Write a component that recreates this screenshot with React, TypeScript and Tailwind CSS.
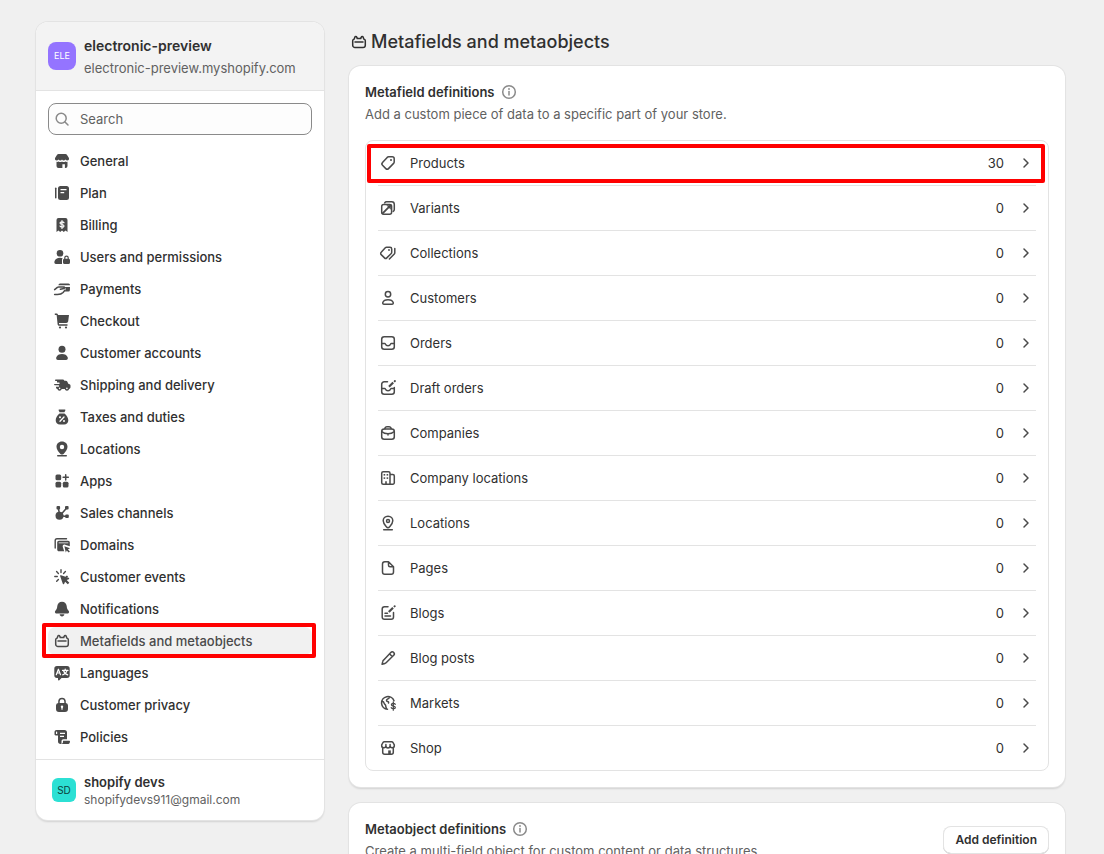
import type { ReactNode } from "react";

type IconProps = { children: ReactNode; className?: string };

/* Filled glyphs for the sidebar, 20px grid */
function Solid({ children, className = "text-[#4a4a4a]" }: IconProps) {
  return (
    <svg viewBox="0 0 20 20" fill="currentColor" aria-hidden="true" className={`size-5 shrink-0 ${className}`}>
      {children}
    </svg>
  );
}

/* Outlined glyphs, 20px grid */
function Line({ children, className = "text-[#4a4a4a]" }: IconProps) {
  return (
    <svg
      viewBox="0 0 20 20"
      fill="none"
      stroke="currentColor"
      strokeWidth="1.5"
      strokeLinecap="round"
      strokeLinejoin="round"
      aria-hidden="true"
      className={`size-5 shrink-0 ${className}`}
    >
      {children}
    </svg>
  );
}

function MetafieldsIcon({ className }: { className?: string }) {
  return (
    <Line className={className}>
      <path d="M3.7 8.8c0-.7.3-1.200.9-1.500l.7-.5.5-1.500c.1-.5.5-.8 1-.8s.9.3 1 .8l.4 1.200h3.600l.4-1.200c.1-.5.5-.8 1-.8s.9.3 1 .8l.5 1.500.7.5c.6.3.9.8.9 1.500v4.400a2.300 2.300 0 0 1-2.300 2.300H6a2.300 2.300 0 0 1-2.300-2.300z" />
      <path d="M6 10h8" />
    </Line>
  );
}

function InfoIcon() {
  return (
    <Line className="text-[#8a8a8a]">
      <circle cx="10" cy="10" r="6.3" />
      <path d="M10 9.5V13" />
      <circle cx="10" cy="7" r=".9" fill="currentColor" stroke="none" />
    </Line>
  );
}

const navItems = [
  {
    label: "General",
    icon: (
      <Solid>
        <path d="M6.500 3h7c.6 0 1.100.3 1.400.8l1.900 3c.7 1.500-.1 2.700-1.500 2.700-.8 0-1.400-.4-1.800-1-.4.6-1 1-1.800 1s-1.400-.4-1.700-1c-.3.6-.9 1-1.700 1s-1.400-.4-1.800-1c-.4.6-1 1-1.800 1-1.400 0-2.200-1.200-1.500-2.700l1.900-3c.3-.5.8-.8 1.400-.8z" />
        <path d="M4.500 10.800c1 .2 1.500 0 2.100-.4 1.100.7 2.300.7 3.400 0 1.100.7 2.300.7 3.400 0 .6.4 1.100.6 2.100.4V15a2 2 0 0 1-2 2h-.6v-3.800h-2.500V17H6.500a2 2 0 0 1-2-2z" />
      </Solid>
    ),
  },
  {
    label: "Plan",
    icon: (
      <Solid>
        <rect x="3" y="4.5" width="1.5" height="11" rx=".75" />
        <path
          fillRule="evenodd"
          d="M8.500 3h6A2.500 2.500 0 0 1 17 5.500v9a2.500 2.500 0 0 1-2.500 2.500h-6A2.500 2.500 0 0 1 6 14.500v-9A2.500 2.500 0 0 1 8.500 3zm0 3v1.300h6V6zm0 3v1.300h3.700V9z"
        />
      </Solid>
    ),
  },
  {
    label: "Billing",
    icon: (
      <Solid>
        <path d="M6.500 3h7a2 2 0 0 1 2 2v12l-2-1.400-1.700 1.400L10 15.600 8.200 17l-1.700-1.400-2 1.400V5a2 2 0 0 1 2-2z" />
        <path
          d="M12 7.800c-.3-.7-1-1-2-1-1.200 0-2 .5-2 1.300 0 2 4 .8 4 2.800 0 .8-.8 1.300-2 1.300-1 0-1.700-.4-2-1.100M10 5.500v8"
          fill="none"
          stroke="#fff"
          strokeWidth="1.2"
          strokeLinecap="round"
        />
      </Solid>
    ),
  },
  {
    label: "Users and permissions",
    icon: (
      <Solid>
        <circle cx="8" cy="6.3" r="3.3" />
        <path d="M2.500 14.200C3.200 12 5.300 10.800 8 10.800c1 0 1.900.2 2.700.5-.5.500-.7 1.100-.7 1.900V17H4c-1.300 0-2-1.300-1.500-2.800z" />
        <path
          fillRule="evenodd"
          d="M12.200 11.500v-.7a2.300 2.300 0 0 1 4.600 0v1c.7.200 1.200.8 1.200 1.600v2A1.600 1.600 0 0 1 16.400 17h-3.800a1.600 1.600 0 0 1-1.600-1.600v-2c0-.8.500-1.500 1.200-1.600zm1.200.2h2.200v-.9a1.100 1.100 0 0 0-2.200 0z"
        />
      </Solid>
    ),
  },
  {
    label: "Payments",
    icon: (
      <Solid>
        <path d="M8 4.500h8.500A1.500 1.500 0 0 1 18 6v.3H6.400C6.600 5.200 7.200 4.500 8 4.500zM12.800 8H18l-.1 3a1.500 1.500 0 0 1-1.500 1.500h-3.700l1.200-2.200z" />
        <path
          d="M2.600 10.600 5.400 8.300c.4-.3.800-.4 1.200-.4h5.200c1 0 1.100 1.300.2 1.500l-3.600.9M2.600 15.500h2.800c2.700 0 4.300-.5 5.700-2l1.900-2.400"
          fill="none"
          stroke="currentColor"
          strokeWidth="1.5"
          strokeLinecap="round"
          strokeLinejoin="round"
        />
      </Solid>
    ),
  },
  {
    label: "Checkout",
    icon: (
      <Solid>
        <path d="M2.800 2.500h1.500c.9 0 1.500.5 1.700 1.300L6.100 4H17l-.8 6.200a2 2 0 0 1-2 1.800H7v1.300h8.500v1.400H7.200c-1 0-1.600-.6-1.600-1.500L4.700 4.600c-.1-.5-.3-.6-.7-.6H2.800z" />
        <circle cx="8" cy="16.5" r="1.1" />
        <circle cx="14" cy="16.5" r="1.1" />
      </Solid>
    ),
  },
  {
    label: "Customer accounts",
    icon: (
      <Solid>
        <circle cx="10" cy="6.3" r="3.5" />
        <path d="M4.300 14.300C5 12.200 7.200 11 10 11s5 1.200 5.700 3.300c.5 1.400-.3 2.700-1.700 2.700H6c-1.400 0-2.200-1.300-1.700-2.700z" />
      </Solid>
    ),
  },
  {
    label: "Shipping and delivery",
    icon: (
      <Solid>
        <path d="M3.700 4.500h7c.9 0 1.500.6 1.600 1.300h1.500c.7 0 1.300.4 1.600 1l.9 1.900 1.300.5c.6.300.9.800.9 1.400v1.700c0 .9-.6 1.500-1.400 1.600a2.200 2.200 0 0 1-4.300.1H9.700a2.200 2.200 0 0 1-4.300-.1C4.600 13.800 4 13.300 4 12.500v-.8h2.500a.7.700 0 0 0 0-1.400H2.700a.7.700 0 0 1 0-1.400H7a.7.700 0 0 0 0-1.400H5V5.900H3.700a.7.700 0 0 1 0-1.400z" />
        <circle cx="7.6" cy="13.4" r=".8" fill="#fff" />
        <circle cx="14.9" cy="13.4" r=".8" fill="#fff" />
      </Solid>
    ),
  },
  {
    label: "Taxes and duties",
    icon: (
      <Solid>
        <path d="M7.300 2.500h5.400c.6 0 .9.600.6 1.100l-.9 1.600H7.600l-.9-1.600c-.3-.5 0-1.100.6-1.100zM7.500 6.500h5c2.300 2 3.800 4.400 3.800 6.800 0 2.600-1.600 4.200-4.200 4.200H7.900c-2.600 0-4.200-1.600-4.200-4.200 0-2.400 1.500-4.800 3.800-6.800z" />
        <g fill="#fff">
          <circle cx="8" cy="10.2" r="1" />
          <circle cx="12" cy="14" r="1" />
          <path d="m8 14.200 4-4.200" stroke="#fff" strokeWidth="1.3" strokeLinecap="round" />
        </g>
      </Solid>
    ),
  },
  {
    label: "Locations",
    icon: (
      <Solid>
        <path
          fillRule="evenodd"
          d="M10 2.500c3.300 0 5.500 2.300 5.500 5.200 0 2.500-1.700 4.600-3.100 6.200-.8.900-1.500 1.600-2.400 1.600s-1.600-.7-2.400-1.600c-1.400-1.600-3.100-3.700-3.100-6.200 0-2.900 2.200-5.200 5.500-5.200zm0 3.300a2.200 2.200 0 1 0 0 4.400 2.200 2.200 0 0 0 0-4.400z"
        />
        <rect x="5" y="16" width="10" height="1.5" rx=".75" />
      </Solid>
    ),
  },
  {
    label: "Apps",
    icon: (
      <Solid>
        <rect x="3.5" y="3.5" width="5.7" height="5.7" rx="1.5" />
        <rect x="3.5" y="10.8" width="5.7" height="5.7" rx="1.5" />
        <rect x="10.8" y="10.8" width="5.7" height="5.7" rx="1.5" />
        <path d="M13.700 3.700v5.200M11.100 6.300h5.200" stroke="currentColor" strokeWidth="1.5" strokeLinecap="round" />
      </Solid>
    ),
  },
  {
    label: "Sales channels",
    icon: (
      <Solid>
        <circle cx="7.5" cy="12.7" r="4" />
        <rect x="4.5" y="3" width="3.6" height="3.6" rx="1" />
        <rect x="13" y="3" width="3.6" height="3.6" rx="1" />
        <rect x="13.2" y="11.5" width="3.6" height="3.6" rx="1" />
        <path d="m6.300 5 1 5M14.500 5.200 8.500 12M8 12.700l7 .7" stroke="currentColor" strokeWidth="1.5" />
      </Solid>
    ),
  },
  {
    label: "Domains",
    icon: (
      <Solid>
        <path
          d="M3.200 13V5.500c0-1 .8-1.800 1.800-1.800h9.500"
          fill="none"
          stroke="currentColor"
          strokeWidth="1.4"
          strokeLinecap="round"
        />
        <path d="M7 5.700h9c1.100 0 1.800.8 1.800 1.800v3.700l-4.600-1.500c-1.700-.5-2.900.7-2.400 2.300l1.400 4.300H7c-1.100 0-1.800-.8-1.800-1.800v-7c0-1 .7-1.800 1.800-1.800z" />
        <rect x="6.7" y="7.2" width="9.6" height="1.2" fill="#fff" opacity=".65" />
        <path d="m12.400 11.300 5.600 2-2.100 1.100 2 2-1.200 1.100-2-2-.9 1.900z" />
      </Solid>
    ),
  },
  {
    label: "Customer events",
    icon: (
      <Solid>
        <path
          d="M9 2.800v2.700M4.600 4.600l1.800 1.800M2.800 9.500h2.500M13.400 4.600l-1.800 1.800M15.200 9.500h-.8M4.700 14.300l1.700-1.700"
          stroke="currentColor"
          strokeWidth="1.4"
          strokeLinecap="round"
        />
        <path d="M8.100 9.100c-.2-.6.300-1.100.9-.9l7.600 2.500c.8.300.8 1.200.1 1.500l-2 .9 2.600 2.700-1.500 1.500-2.700-2.600-.9 2c-.3.700-1.300.7-1.500-.1z" />
      </Solid>
    ),
  },
  {
    label: "Notifications",
    icon: (
      <Solid>
        <path d="M10 2.700c2.700 0 4.500 1.900 4.700 4.400.2 2.300.5 3 1.700 4.400.5.600.7 1 .7 1.500 0 .9-.7 1.500-1.700 1.500H4.600c-1 0-1.700-.6-1.700-1.500 0-.5.2-.9.7-1.500 1.200-1.400 1.500-2.100 1.700-4.400.2-2.500 2-4.400 4.700-4.400z" />
        <path d="M7.700 15.300h4.600c0 1.300-1 2.200-2.300 2.200s-2.300-.9-2.300-2.200z" />
      </Solid>
    ),
  },
  { label: "Metafields and metaobjects", icon: <MetafieldsIcon />, active: true },
  {
    label: "Languages",
    icon: (
      <Solid>
        <path d="M5 3h10a2.700 2.700 0 0 1 2.700 2.700v6.600A2.700 2.700 0 0 1 15 15H9.500l-2.200 2.300c-.5.500-1.300.2-1.300-.5V15H5a2.700 2.700 0 0 1-2.700-2.700V5.700A2.700 2.700 0 0 1 5 3z" />
        <path
          d="m4.300 11.700 2.100-5.500 2.100 5.500M5 10h2.800M10.500 7.400h5.500M13.200 6v1.400M15 7.500c-.4 2-2.200 3.700-4.300 4.400M11.500 7.500c.5 2 2.100 3.600 4.200 4.400"
          fill="none"
          stroke="#fff"
          strokeWidth="1.2"
          strokeLinecap="round"
          strokeLinejoin="round"
        />
      </Solid>
    ),
  },
  {
    label: "Customer privacy",
    icon: (
      <Solid>
        <path
          fillRule="evenodd"
          d="M6.200 8V6.600a3.800 3.800 0 0 1 7.600 0V8A2.500 2.500 0 0 1 16 10.500V14a3 3 0 0 1-3 3H7a3 3 0 0 1-3-3v-3.500A2.500 2.500 0 0 1 6.200 8zm1.500 0h4.600V6.600a2.300 2.300 0 0 0-4.600 0z"
        />
        <circle cx="10" cy="11.8" r="1.2" fill="#fff" />
        <path d="M10 12v2.200" stroke="#fff" strokeWidth="1.2" strokeLinecap="round" />
      </Solid>
    ),
  },
  {
    label: "Policies",
    icon: (
      <Solid>
        <path
          fillRule="evenodd"
          d="M4.500 3h8A2.500 2.500 0 0 1 15 5.500v6.700h-3.500c-1.200 0-2 .8-2 2V17h-.8A2.700 2.700 0 0 1 6 14.300V8.500H3.700c-.7 0-1.200-.5-1.200-1.200V5c0-1.200.9-2 2-2zM4 5.200v1.900h1.200V5.200c0-.8-1.200-.8-1.200 0zM8 5.800V7h5V5.800zm0 2.900v1.200h4V8.700z"
        />
        <path d="M11 13.700h6.300c.4 0 .7.300.7.700 0 1.600-1 2.600-2.500 2.600H9.700c.9-.4 1.300-1.200 1.300-2.200z" />
      </Solid>
    ),
  },
];

const definitions = [
  {
    label: "Products",
    count: 30,
    highlighted: true,
    icon: (
      <Line>
        <path d="M10.600 3.800h3.600c1.100 0 2 .9 2 2v3.100c0 .6-.2 1.100-.6 1.500l-5.100 5.200c-.8.8-1.900.8-2.700 0l-3.300-3.300c-.8-.8-.8-1.900 0-2.700l4.700-5.200c.4-.4.9-.6 1.400-.6z" />
        <circle cx="13" cy="7" r="1" fill="currentColor" stroke="none" />
      </Line>
    ),
  },
  {
    label: "Variants",
    count: 0,
    icon: (
      <Line>
        <rect x="3.7" y="6.4" width="9.900" height="9.900" rx="2" />
        <path d="M6.700 4.900c.4-.7 1-1.100 1.800-1.100h5.200a2.600 2.600 0 0 1 2.600 2.600v5.200c0 .8-.4 1.400-1.100 1.800" />
        <path d="m4.600 15.400 8.200-8.200" strokeWidth="1.8" />
        <path d="M8.300 7.200h4.500v4.500z" fill="currentColor" stroke="none" />
      </Line>
    ),
  },
  {
    label: "Collections",
    count: 0,
    icon: (
      <Line>
        <path d="M8.500 4.200H12c1 0 1.700.7 1.700 1.700v3.300c0 .5-.2.900-.5 1.300l-4.400 4.400c-.7.700-1.600.7-2.300 0l-3.300-3.300c-.7-.7-.7-1.600 0-2.300l4.100-4.600c.3-.3.800-.5 1.200-.5z" />
        <circle cx="11" cy="7" r=".9" fill="currentColor" stroke="none" />
        <path d="M16.800 5.500v4.200c0 .5-.2 1-.5 1.300l-4.900 5" />
      </Line>
    ),
  },
  {
    label: "Customers",
    count: 0,
    icon: (
      <Line>
        <circle cx="10" cy="6.2" r="2.7" />
        <path d="M4.800 14.600c.6-1.800 2.600-2.900 5.200-2.900s4.600 1.100 5.200 2.900c.3.900-.3 1.700-1.200 1.700H6c-.9 0-1.500-.8-1.200-1.700z" />
      </Line>
    ),
  },
  {
    label: "Orders",
    count: 0,
    icon: (
      <Line>
        <rect x="3.7" y="3.8" width="12.6" height="12.4" rx="2.5" />
        <path d="M3.800 10.500h2.800c.4 0 .7.200.8.500.4 1 1.300 1.700 2.600 1.700s2.200-.7 2.600-1.700c.1-.3.400-.5.800-.5h2.800" />
      </Line>
    ),
  },
  {
    label: "Draft orders",
    count: 0,
    icon: (
      <Line>
        <path d="M9.500 3.800H6.200a2.500 2.500 0 0 0-2.500 2.500v7.400a2.500 2.500 0 0 0 2.500 2.500h7.600a2.500 2.500 0 0 0 2.500-2.500V9.500" />
        <path d="M3.800 10.500h2.800c.4 0 .7.200.8.500.4 1 1.300 1.700 2.600 1.700s2.200-.7 2.600-1.700c.1-.3.400-.5.800-.5h2.800" />
        <path d="m11 8.700 4.200-4.200" strokeWidth="2.2" strokeLinecap="butt" />
        <path d="m16.700 3.200.2-.2" strokeWidth="2" />
      </Line>
    ),
  },
  {
    label: "Companies",
    count: 0,
    icon: (
      <Line>
        <rect x="3.7" y="6" width="12.6" height="10.2" rx="2.5" />
        <path d="M6.800 5.800c.2-1.300 1-2.100 2.200-2.100h2c1.200 0 2 .8 2.200 2.100M4 8.800c1.500 1.400 3.500 2 6 2s4.500-.6 6-2M10 10.800V12" />
      </Line>
    ),
  },
  {
    label: "Company locations",
    count: 0,
    icon: (
      <Line>
        <path d="M12 16.200H5.200a1.500 1.500 0 0 1-1.500-1.500V5.300a1.500 1.500 0 0 1 1.500-1.500h5.300A1.500 1.500 0 0 1 12 5.300zM12 6.500h2.800A1.500 1.500 0 0 1 16.300 8v6.700a1.500 1.500 0 0 1-1.500 1.500H12" />
        <path d="M8 16v-2.800" strokeWidth="1.6" strokeLinecap="butt" />
        <g fill="currentColor" stroke="none">
          <rect x="5.6" y="6" width="1.6" height="1.6" />
          <rect x="8.6" y="6" width="1.6" height="1.6" />
          <rect x="5.6" y="9.3" width="1.6" height="1.6" />
          <rect x="8.6" y="9.3" width="1.6" height="1.6" />
        </g>
      </Line>
    ),
  },
  {
    label: "Locations",
    count: 0,
    icon: (
      <Line>
        <path d="M10 3.200c2.900 0 4.800 2 4.800 4.500 0 2.300-1.500 4.100-2.900 5.700-.7.800-1.300 1.300-1.900 1.300s-1.200-.5-1.900-1.300c-1.400-1.600-2.900-3.400-2.900-5.700 0-2.500 1.900-4.500 4.800-4.500z" />
        <circle cx="10" cy="7.9" r="1.5" />
        <path d="M5.700 16.800h8.600" />
      </Line>
    ),
  },
  {
    label: "Pages",
    count: 0,
    icon: (
      <Line>
        <path d="M10.500 3.800H6.800a2.300 2.300 0 0 0-2.300 2.300v7.800a2.300 2.300 0 0 0 2.300 2.300h6.400a2.300 2.300 0 0 0 2.300-2.300V8.800zv3.500c0 .8.700 1.500 1.500 1.500h3.500" />
      </Line>
    ),
  },
  {
    label: "Blogs",
    count: 0,
    icon: (
      <Line>
        <path d="M10 3.800H6.500a2.300 2.300 0 0 0-2.300 2.300v7.800a2.300 2.300 0 0 0 2.300 2.300h6.700a2.300 2.300 0 0 0 2.300-2.300V9.500M7 10.300h2.500M7 13h5.500" />
        <path d="m10.800 9 4.200-4.200" strokeWidth="2.2" strokeLinecap="butt" />
        <path d="m16.500 3.400.2-.2" strokeWidth="2" />
      </Line>
    ),
  },
  {
    label: "Blog posts",
    count: 0,
    icon: (
      <Line>
        <path d="M12.800 4.400a2 2 0 0 1 2.900 0 2 2 0 0 1 0 2.800l-7.600 7.600c-.3.300-.7.600-1.200.7l-2.800.7.700-2.800c.1-.5.300-.9.700-1.200zM11.500 5.800l2.700 2.700" />
      </Line>
    ),
  },
  {
    label: "Markets",
    count: 0,
    icon: (
      <Line>
        <path d="M9.500 16.300A6.400 6.400 0 1 1 16 7.800M4 8.300c1.500.2 2 1 2.200 2 .2 1.200 1.500 1 1.500 2.500 0 1.200.5 1.500.8 3.200M11.500 4c-.3 1.500-1.300 1.800-2.300 2.300-1 .6-.9 2.100.3 2.200 1 .1 1.300.6 1 1.500" />
        <path
          d="M17.200 11.300c-.3-.6-1-.9-1.900-.9-1.100 0-1.900.5-1.900 1.300 0 1.900 3.900.8 3.900 2.700 0 .8-.8 1.300-2 1.300-1 0-1.700-.4-2-1M15.300 9v8.200"
          strokeWidth="1.3"
        />
      </Line>
    ),
  },
  {
    label: "Shop",
    count: 0,
    icon: (
      <Line>
        <path d="M6.300 3.800h7.400c.5 0 1 .3 1.300.7l1.300 2.300v.7a2.100 2.100 0 0 1-4.200.3 2.100 2.100 0 0 1-4.200 0 2.100 2.100 0 0 1-4.200-.3v-.7L5 4.500c.3-.4.8-.7 1.300-.7zM7.900 7.800V6.500M12.100 7.800V6.500M4.700 10v4.200c0 1.100.9 2 2 2h6.600c1.100 0 2-.9 2-2V10" />
        <path d="M11.500 16v-3.600" strokeWidth="2.6" strokeLinecap="butt" />
      </Line>
    ),
  },
];

function Sidebar() {
  return (
    <aside className="w-72 shrink-0 overflow-hidden rounded-xl bg-white shadow-[0_0_0_1px_#e3e3e3,0_2px_2px_rgba(0,0,0,0.13)]">
      <div className="flex items-center gap-2 border-b border-[#e3e3e3] bg-[#f3f3f3] p-3">
        <div className="flex size-7 shrink-0 items-center justify-center rounded-lg bg-[#9474ff] text-[9px] text-white">
          ELE
        </div>
        <div>
          <p className="text-sm leading-6 font-semibold">electronic-preview</p>
          <p className="text-[#616161]">electronic-preview.myshopify.com</p>
        </div>
      </div>

      <div className="px-3 pt-3 pb-2">
        <div className="relative mb-3">
          <input
            type="text"
            aria-label="Search"
            placeholder="Search"
            className="block h-8 w-full rounded-lg border border-[#8a8a8a] bg-[#fdfdfd] pr-3 pl-[31px] placeholder:text-[#616161]"
          />
          <Line className="pointer-events-none absolute top-1.5 left-1 text-[#8a8a8a]">
            <circle cx="9.2" cy="9.2" r="5" />
            <path d="m13 13 3 3" />
          </Line>
        </div>

        <nav aria-label="Settings" className="flex flex-col gap-1">
          {navItems.map((item) => (
            <a
              key={item.label}
              href="#"
              className={`relative flex h-7 items-center gap-2 rounded-lg px-1 font-[550] ${
                item.active ? "bg-[#f1f1f1] text-[#4a4a4a]" : ""
              }`}
            >
              {item.icon}
              {item.label}
              {item.active && (
                <span className="absolute -top-1 -right-1 -bottom-[3px] -left-1.5 rounded-xs border-4 border-[#ff0000]" />
              )}
            </a>
          ))}
        </nav>
      </div>

      <div className="flex items-center gap-2 border-t border-[#e3e3e3] px-4 py-3">
        <div className="flex size-6 shrink-0 items-center justify-center rounded-md bg-[#2ce0d4] text-[10px] text-[#0c3f3c]">
          SD
        </div>
        <div>
          <p className="font-semibold">shopify devs</p>
          <p className="text-xs leading-4 text-[#616161]">shopifydevs911@gmail.com</p>
        </div>
      </div>
    </aside>
  );
}

function Card({ children }: { children: ReactNode }) {
  return (
    <section className="rounded-xl bg-white p-4 shadow-[0_0_0_1px_#e3e3e3,0_2px_2px_rgba(0,0,0,0.13)]">
      {children}
    </section>
  );
}

function CardHeading({ title, text }: { title: string; text: string }) {
  return (
    <div>
      <h2 className="mb-0.5 flex items-center gap-1 font-semibold">
        {title}
        <InfoIcon />
      </h2>
      <p className="text-[#616161]">{text}</p>
    </div>
  );
}

export default function App() {
  return (
    <div className="flex min-h-screen items-start gap-[25px] bg-[#f0f0f0] pt-[22px] pr-[39px] pl-9 font-['Inter',sans-serif] text-[13px] leading-5 text-[#303030]">
      <Sidebar />

      <main className="min-w-0 flex-1 pt-2">
        <div className="mb-3 flex items-center gap-0.5">
          <MetafieldsIcon className="text-[#303030]" />
          <h1 className="text-lg leading-6 font-[550]">Metafields and metaobjects</h1>
        </div>

        <div className="flex flex-col gap-4">
          <Card>
            <CardHeading
              title="Metafield definitions"
              text="Add a custom piece of data to a specific part of your store."
            />
            <ul className="mt-4 divide-y divide-[#e3e3e3] rounded-lg border border-[#e3e3e3] px-3">
              {definitions.map((item) => (
                <li key={item.label} className="relative">
                  <a href="#" className="flex h-11 items-center gap-3">
                    {item.icon}
                    <span className="flex-1">{item.label}</span>
                    <span>{item.count}</span>
                    <Line>
                      <path d="m8 6 4 4-4 4" />
                    </Line>
                  </a>
                  {item.highlighted && (
                    <span className="pointer-events-none absolute top-[3px] -right-[9px] bottom-0.5 -left-[11px] rounded-xs border-4 border-[#ff0000]" />
                  )}
                </li>
              ))}
            </ul>
          </Card>

          <Card>
            <div className="flex items-center justify-between gap-4">
              <CardHeading
                title="Metaobject definitions"
                text="Create a multi-field object for custom content or data structures."
              />
              <button
                type="button"
                className="h-7 shrink-0 rounded-lg bg-white px-3 text-xs font-semibold shadow-[inset_0_0_0_1px_#e3e3e3,inset_0_-1px_0_#b5b5b5]"
              >
                Add definition
              </button>
            </div>
          </Card>
        </div>
      </main>
    </div>
  );
}
